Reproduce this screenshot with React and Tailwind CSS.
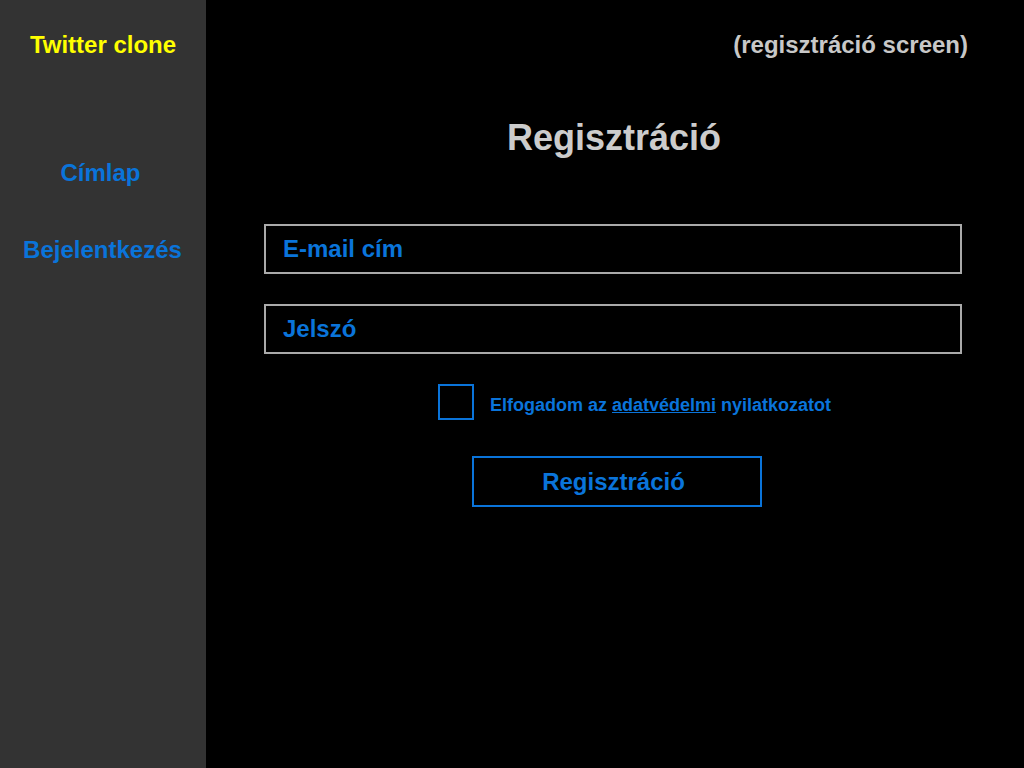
import { useState } from 'react';

const BLUE = 'text-[#0a74da]';

const SideLink = ({ children, className = '' }) => (
  <a href="#" className={`block text-center text-[24px] leading-[28px] font-bold ${BLUE} ${className}`}>
    {children}
  </a>
);

const Field = ({ placeholder, type = 'text', className = '' }) => (
  <input
    type={type}
    placeholder={placeholder}
    className={`block w-[698px] h-[50px] border-2 border-[#aaaaaa] bg-black px-[17px] text-[24px] font-bold text-[#0a74da] placeholder:text-[#0a74da] outline-none ${className}`}
  />
);

export default function App() {
  const [accepted, setAccepted] = useState(false);

  return (
    <div className="flex w-[1024px] h-[768px] bg-black font-['Liberation_Sans',Arial,sans-serif]">
      {/* oldalsáv */}
      <aside className="w-[206px] shrink-0 bg-[#333333] pt-[31px]">
        <div className="text-center text-[24px] leading-[28px] font-bold text-[#ffff00]">Twitter clone</div>
        <SideLink className="mt-[100px] pr-[5px]">Címlap</SideLink>
        <SideLink className="mt-[49px] pr-[1px]">Bejelentkezés</SideLink>
      </aside>

      {/* tartalom */}
      <main className="flex-1 pt-[31px]">
        <div className="pr-[56px] text-right text-[24px] leading-[28px] font-bold text-[#c8c8c8]">
          (regisztráció screen)
        </div>
        <h1 className="mt-[59px] text-center text-[36px] leading-[40px] font-bold text-[#cccccc] pr-[2px]">
          Regisztráció
        </h1>

        <form className="mt-[66px] pl-[58px]" onSubmit={e => e.preventDefault()}>
          <Field placeholder="E-mail cím" />
          <Field placeholder="Jelszó" type="password" className="mt-[30px]" />

          <label className="mt-[30px] ml-[174px] flex items-center gap-[16px] cursor-pointer">
            <span
              className="w-[36px] h-[36px] border-2 border-[#0a74da] flex items-center justify-center"
              onClick={() => setAccepted(a => !a)}
            >
              {accepted && <span className="w-[20px] h-[20px] bg-[#0a74da]" />}
            </span>
            <span className="mt-[6px] text-[18px] leading-[22px] font-bold text-[#0a74da]">
              Elfogadom az <a href="#" className="underline">adatvédelmi</a> nyilatkozatot
            </span>
          </label>

          <button
            type="submit"
            className="mt-[36px] ml-[208px] block w-[290px] h-[51px] border-2 border-[#0a74da] text-[24px] font-bold text-[#0a74da] pr-[7px]"
          >
            Regisztráció
          </button>
        </form>
      </main>
    </div>
  );
}
